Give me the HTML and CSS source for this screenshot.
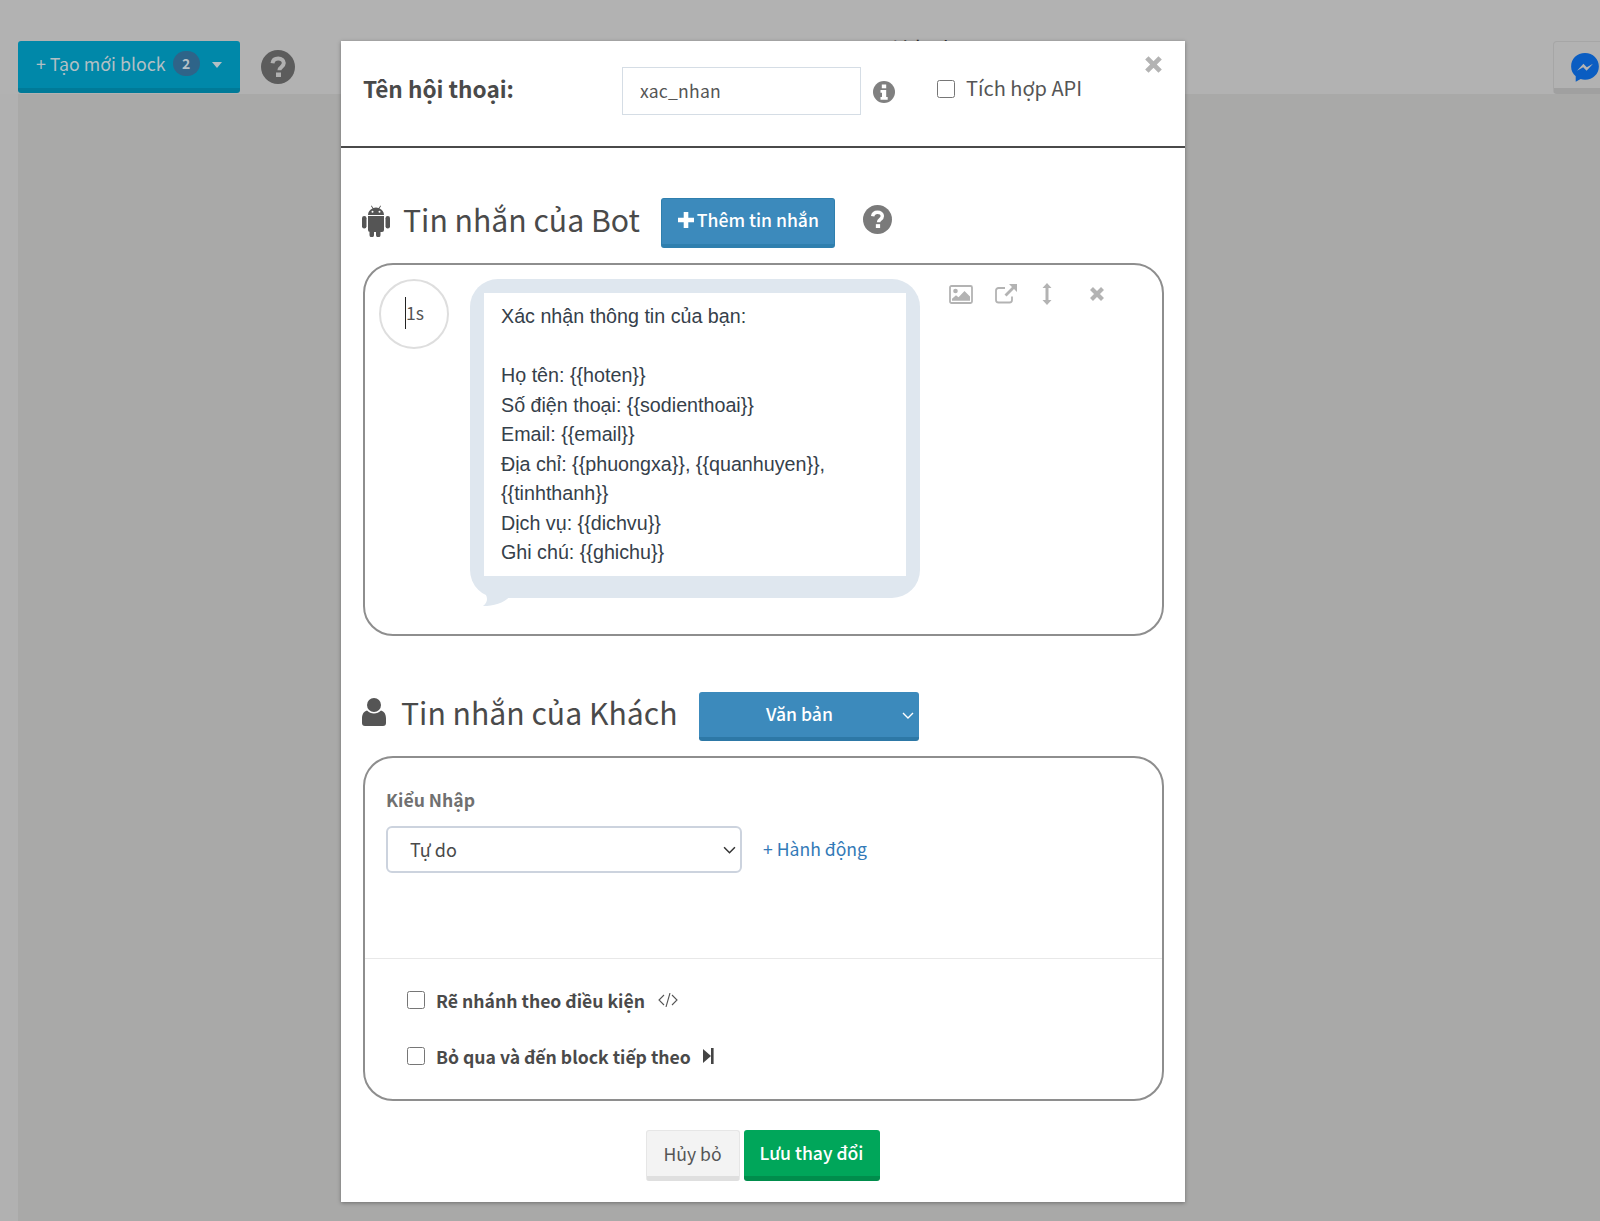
FILE: index.html
```html
<!DOCTYPE html>
<html lang="vi">
<head>
<meta charset="utf-8">
<title>Tin nhắn</title>
<link rel="stylesheet" href="styles.css">
</head>
<body>
<div class="page">
  <header class="topbar">
    <button class="create-btn">+ Tạo mới block <span class="badge">2</span><span class="caret"></span></button>
    <svg class="help help-top" viewBox="0 0 34 34"><circle cx="17" cy="17" r="17" fill="#5c5c5c"/><path d="M11.5 13.2c.4-3 2.700-4.700 5.700-4.700 3.200 0 5.600 1.900 5.600 4.600 0 4-4.400 3.700-4.400 7.200" fill="none" stroke="#b0b0b0" stroke-width="4"/><rect x="15" y="22.500" width="5" height="4.500" fill="#b0b0b0"/></svg>
    <div class="back-title">ti block</div>
    <div class="messenger-tab">
      <svg class="messenger" viewBox="0 0 28 30"><path d="M14 1C6.500 1 1 6.500 1 13.500c0 3.800 1.600 7 4.300 9.200V28l4.600-2.700c1.300.4 2.700.6 4.100.6 7.500 0 13-5.500 13-12.400S21.500 1 14 1z" fill="#0a5dc2"/><path d="M6.500 17.500l6-6.500 3.200 3.200 5.800-3.200-6 6.500-3.200-3.200z" fill="#b4b4b4"/></svg>
    </div>
  </header>
  <main class="backdrop-main"></main>

  <section class="modal">
    <div class="modal-head">
      <h2 class="conv-label">Tên hội thoại:</h2>
      <input class="conv-input" type="text" value="xac_nhan">
      <svg class="info" viewBox="0 0 22 22"><circle cx="11" cy="11" r="11" fill="#808080"/><rect x="8.800" y="3.500" width="4.400" height="3.800" fill="#fff"/><path d="M7.500 9h5.700v7h1.500v2.800H7.500V16h1.500v-4.200H7.500z" fill="#fff"/></svg>
      <label class="api-check"><input type="checkbox"><span>Tích hợp API</span></label>
      <svg class="close" viewBox="0 0 20 20"><path d="M3 3l14 14M17 3L3 17" stroke="#b3b3b3" stroke-width="5"/></svg>
    </div>

    <div class="modal-body">
      <div class="section-head bot-head">
        <svg class="android" viewBox="0 0 28 32" fill="#555"><rect x="0" y="11" width="4.500" height="12.500" rx="2.200"/><rect x="23.500" y="11" width="4.500" height="12.500" rx="2.200"/><path d="M6 11h16v14a2 2 0 0 1-2 2h-1.500v3a2.200 2.200 0 0 1-4.500 0v-3h-.200H12v3a2.200 2.200 0 0 1-4.500 0v-3H8a2 2 0 0 1-2-2z"/><path d="M6 10c0-3.300 2-5.400 4.500-6.500L9 1l.6-.5 1.700 2.500a9 9 0 0 1 5.400 0L18.400.5 19 1l-1.500 2.500C20 4.600 22 6.700 22 10z"/><circle cx="10.500" cy="6.800" r="1" fill="#fff"/><circle cx="17.500" cy="6.800" r="1" fill="#fff"/></svg>
        <h2 class="section-title">Tin nhắn của Bot</h2>
        <button class="btn btn-blue add-msg"><svg class="plus" viewBox="0 0 16 16"><path d="M8 0v16M0 8h16" stroke="#fff" stroke-width="4.600"/></svg>Thêm tin nhắn</button>
        <svg class="help help-bot" viewBox="0 0 30 30"><circle cx="15" cy="15" r="15" fill="#7a7a7a"/><path d="M10 11.700c.4-2.700 2.400-4.200 5-4.200 2.900 0 5 1.700 5 4 0 3.600-3.900 3.300-3.900 6.400" fill="none" stroke="#fff" stroke-width="3.600"/><rect x="13.300" y="19.800" width="4.400" height="4" fill="#fff"/></svg>
      </div>

      <div class="panel bot-panel">
        <div class="delay"><span class="delay-text">1s</span></div>
        <div class="bubble">
          <div class="bubble-text">
            <p>Xác nhận thông tin của bạn:</p>
            <p>&nbsp;</p>
            <p>Họ tên: {{hoten}}</p>
            <p>Số điện thoại: {{sodienthoai}}</p>
            <p>Email: {{email}}</p>
            <p>Địa chỉ: {{phuongxa}}, {{quanhuyen}},<br>{{tinhthanh}}</p>
            <p>Dịch vụ: {{dichvu}}</p>
            <p>Ghi chú: {{ghichu}}</p>
          </div>
          <svg class="tail" viewBox="0 0 28 12"><path d="M3 0h25C22 8 11 11 0 11 4 8 5 4 3 0z" fill="#dfe7ef"/></svg>
        </div>
        <div class="tools">
          <svg class="tool t-image" viewBox="0 0 24 19"><rect x="1" y="1" width="22" height="17" rx="1.500" fill="none" stroke="#b3b3b3" stroke-width="1.800"/><circle cx="6.500" cy="6" r="2.300" fill="#b3b3b3"/><path d="M3 15.800v-2l4-3.500 2.500 2L15.500 6l5.500 5.500v4.300z" fill="#b3b3b3"/></svg>
          <svg class="tool t-ext" viewBox="0 0 22 20"><path d="M17 12.500V16a2.500 2.500 0 0 1-2.500 2.500h-11A2.500 2.500 0 0 1 1 16V6.500A2.500 2.500 0 0 1 3.500 4H10" fill="none" stroke="#b3b3b3" stroke-width="1.800"/><path d="M14 0h8v8l-3-3-7.500 7.500-2-2L17 3z" fill="#b3b3b3"/></svg>
          <svg class="tool t-size" viewBox="0 0 10 22"><path d="M5 0l4.500 5H6.500v12h3L5 22 .5 17h3V5h-3z" fill="#b3b3b3"/></svg>
          <svg class="tool t-del" viewBox="0 0 16 16"><path d="M2.500 2.500l11 11M13.500 2.500l-11 11" stroke="#b3b3b3" stroke-width="4.200"/></svg>
        </div>
      </div>

      <div class="section-head user-head">
        <svg class="user" viewBox="0 0 24 28" fill="#555"><circle cx="12" cy="7" r="7"/><path d="M5 12.500c2 2 4.200 3 7 3s5-1 7-3c3 .8 5 3.500 5 8V25a3 3 0 0 1-3 3H3a3 3 0 0 1-3-3v-4.500c0-4.500 2-7.200 5-8z"/></svg>
        <h2 class="section-title">Tin nhắn của Khách</h2>
        <button class="btn btn-blue type-select"><span>Văn bản</span><svg class="chev" viewBox="0 0 12 7"><path d="M1 1l5 5 5-5" fill="none" stroke="#fff" stroke-width="1.400"/></svg></button>
      </div>

      <div class="panel user-panel">
        <div class="input-area">
          <label class="field-label">Kiểu Nhập</label>
          <div class="field-row">
            <div class="select-wrap">
              <select class="type-field"><option>Tự do</option></select>
              <svg class="select-chev" viewBox="0 0 12 7"><path d="M1 1l5 5 5-5" fill="none" stroke="#333" stroke-width="1.400"/></svg>
            </div>
            <a class="action-link">+ Hành động</a>
          </div>
        </div>
        <div class="options">
          <label class="opt"><input type="checkbox"><span>Rẽ nhánh theo điều kiện</span><svg class="opt-code" viewBox="0 0 20 14"><path d="M6 2L1 7l5 5M14 2l5 5-5 5M12 0L8 14" fill="none" stroke="#555" stroke-width="1.100"/></svg></label>
          <label class="opt"><input type="checkbox"><span>Bỏ qua và đến block tiếp theo</span><svg class="opt-skip" viewBox="0 0 11 16"><path d="M0 1l8 7-8 7z" fill="#444"/><rect x="8" y="0" width="2.600" height="16" fill="#444"/></svg></label>
        </div>
      </div>

      <div class="modal-foot">
        <button class="btn btn-gray">Hủy bỏ</button>
        <button class="btn btn-green">Lưu thay đổi</button>
      </div>
    </div>
  </section>
</div>
</body>
</html>
```
FILE: styles.css
```css
* { box-sizing: border-box; }
html, body { margin: 0; padding: 0; }
body {
  font-family: "Noto Sans CJK JP", "Noto Sans", sans-serif;
  color: #4a4a4a;
  background: #b1b1b1;
}
.page {
  position: relative;
  width: 1600px;
  height: 1221px;
  overflow: hidden;
  display: flex;
  flex-direction: column;
}
.topbar {
  height: 94px;
  flex: none;
  padding: 41px 0 0 18px;
  display: flex;
  align-items: flex-start;
  background: #b2b2b2;
}
.backdrop-main {
  flex: 1;
  margin-left: 18px;
  background: #a9a9a8;
}
.create-btn {
  width: 222px;
  height: 52px;
  border: 0;
  border-bottom: 5px solid #007a98;
  border-radius: 3px;
  background: #0088a9;
  color: #b3bfc4;
  font: 400 17.800px "Noto Sans CJK JP", sans-serif;
  padding: 0 0 3px 18px;
  display: flex;
  align-items: center;
  white-space: pre;
}
.badge {
  width: 27px;
  height: 25px;
  margin-left: 3px;
  border-radius: 13px;
  background: #2e6489;
  color: #b5c0c7;
  font-size: 14px;
  font-weight: 700;
  line-height: 25px;
  text-align: center;
}
.caret {
  margin: 3px 0 0 12px;
  border-top: 6px solid #b3bfc4;
  border-left: 5.500px solid transparent;
  border-right: 5.500px solid transparent;
}
.help { flex: none; display: block; }
.help-top { width: 34px; height: 34px; margin: 9px 0 0 21px; }
.back-title {
  margin: -6px 0 0 590px;
  font-size: 20px;
  line-height: 26px;
  color: #333;
  white-space: nowrap;
}
.messenger-tab {
  position: absolute;
  left: 1553px;
  top: 41px;
  width: 60px;
  height: 53px;
  border: 1px solid #a6a6a6;
  border-bottom: 6px solid #a0a0a0;
  border-radius: 4px;
  background: #b2b2b2;
}
.messenger { position: absolute; left: 16px; top: 10px; width: 30px; height: 32px; }

.modal {
  position: absolute;
  left: 341px;
  top: 41px;
  width: 844px;
  height: 1161px;
  background: #fff;
  box-shadow: 0 1px 4px rgba(0,0,0,.35);
}
.modal-head {
  position: relative;
  height: 107px;
  border-bottom: 2px solid #4a4a4a;
  padding: 26px 0 0 22px;
  display: flex;
  align-items: flex-start;
}
.conv-label {
  width: 259px;
  margin: -1px 0 0;
  font-size: 22.600px;
  font-weight: 700;
  line-height: 46px;
  white-space: nowrap;
}
.conv-input {
  width: 239px;
  height: 48px;
  border: 1px solid #d5dde5;
  padding: 0 17px 2px;
  font: 400 17.600px "Noto Sans CJK JP", sans-serif;
  letter-spacing: .2px;
  color: #555;
  outline: none;
}
.info { width: 22px; height: 22px; margin: 14px 0 0 12px; flex: none; }
.api-check {
  display: flex;
  align-items: center;
  margin: -1px 0 0 42px;
  height: 42px;
  font-size: 20px;
  color: #555;
}
.api-check input { width: 18px; height: 18px; margin: 3px 11px 0 0; }
.close { position: absolute; left: 803px; top: 14px; width: 19px; height: 19px; }

.modal-body { padding: 50px 21px 0 22px; }
.section-head { display: flex; align-items: center; }
.section-title {
  margin: -9px 0 0;
  font-size: 30.200px;
  font-weight: 400;
  line-height: 48px;
  color: #4a4a4a;
  white-space: nowrap;
}
.bot-head { height: 50px; }
.android { width: 28px; height: 32px; margin: -4px 13px 0 -1px; flex: none; }
.btn {
  border: 0;
  border-radius: 3px;
  font: 400 17.600px "Noto Sans CJK JP", sans-serif;
}
.btn-blue {
  background: #3c8abc;
  color: #fff;
  border-bottom: 4px solid #2d78a6;
  font-weight: 500;
}
.add-msg {
  width: 174px;
  height: 50px;
  margin-left: 21px;
  padding: 0 0 4px 1px;
  display: flex;
  align-items: center;
  justify-content: center;
  gap: 3px;
  border: 1px solid #2f7fae;
  border-bottom-width: 4px;
}
.plus { width: 16px; height: 16px; }
.help-bot { width: 29px; height: 29px; margin: -8px 0 0 28px; }

.panel {
  margin-top: 15px;
  width: 801px;
  border: 2px solid #8e8e8e;
  border-radius: 30px;
}
.bot-panel {
  height: 373px;
  padding: 14px 0 0 14px;
  display: flex;
  align-items: flex-start;
}
.delay {
  width: 70px;
  height: 70px;
  flex: none;
  border: 2px solid #dedede;
  border-radius: 50%;
  padding: 16px 0 0 24px;
}
.delay-text {
  display: block;
  height: 32px;
  border-left: 1px solid #222;
  font-size: 17.600px;
  line-height: 32px;
  color: #555;
}
.bubble {
  position: relative;
  width: 450px;
  height: 319px;
  margin-left: 21px;
  padding: 14px 14px 22px;
  border-radius: 28px;
  flex: none;
  background: #dfe7ef;
}
.bubble-text {
  height: 283px;
  background: #fff;
  padding: 9px 17px 0;
  font-family: "Liberation Sans", Arial, sans-serif;
  font-size: 19.700px;
  line-height: 29.500px;
  color: #35404a;
}
.bubble-text p { margin: 0; }
.tail { position: absolute; left: 13px; top: 316px; width: 28px; height: 12px; }
.tools { position: relative; flex: 1; height: 30px; }
.tool { position: absolute; display: block; }
.t-image { left: 29px; top: 6px; width: 24px; height: 19px; }
.t-ext { left: 75px; top: 5px; width: 22px; height: 20px; }
.t-size { left: 122px; top: 4px; width: 10px; height: 22px; }
.t-del { left: 169px; top: 7px; width: 16px; height: 16px; }

.user-head { height: 49px; margin-top: 56px; }
.user { width: 24px; height: 28px; margin: -9px 15px 0 -1px; flex: none; }
.type-select {
  position: relative;
  width: 220px;
  height: 49px;
  margin-left: 21px;
  padding: 0 18px 2px 0;
  text-align: center;
}
.chev { position: absolute; right: 5px; top: 20px; width: 12px; height: 7px; }
.user-panel { height: 345px; }
.input-area { height: 201px; padding: 28px 0 0 21px; border-bottom: 1px solid #e8e8e8; }
.field-label { display: block; font-size: 17.600px; font-weight: 700; line-height: 28px; color: #707070; }
.field-row { display: flex; align-items: center; margin-top: 12px; }
.select-wrap { position: relative; width: 356px; height: 47px; }
.type-field {
  width: 356px;
  height: 47px;
  border: 2px solid #ccd3de;
  border-radius: 6px;
  background: #fff;
  padding: 0 22px 2px;
  appearance: none;
  font: 400 18px "Noto Sans CJK JP", sans-serif;
  color: #4a4a4a;
  outline: none;
}
.select-chev { position: absolute; right: 6px; top: 20px; width: 13px; height: 8px; pointer-events: none; }
.action-link { margin: -2px 0 0 21px; font-size: 17.600px; color: #337ab7; }
.options { padding: 27px 0 0 42px; display: flex; flex-direction: column; gap: 28px; }
.opt { display: flex; align-items: center; height: 28px; font-size: 17.600px; font-weight: 700; color: #4a4a4a; }
.opt input { width: 18px; height: 18px; margin: 0 11px 0 0; }
.opt-code { width: 20px; height: 14px; margin-left: 13px; }
.opt-skip { width: 11px; height: 16px; margin-left: 12px; }

.modal-foot { display: flex; justify-content: center; gap: 4px; margin-top: 29px; padding-right: 2px; }
.btn-gray {
  width: 94px;
  height: 51px;
  padding-bottom: 2px;
  background: #f3f3f3;
  border: 1px solid #e6e6e6;
  border-bottom: 5px solid #dfdfdf;
  color: #555;
  font-size: 17.600px;
}
.btn-green {
  width: 136px;
  height: 51px;
  padding-bottom: 2px;
  background: #00a65a;
  border-bottom: 5px solid #008d4c;
  color: #fff;
  font-size: 17.600px;
  font-weight: 500;
}
```
